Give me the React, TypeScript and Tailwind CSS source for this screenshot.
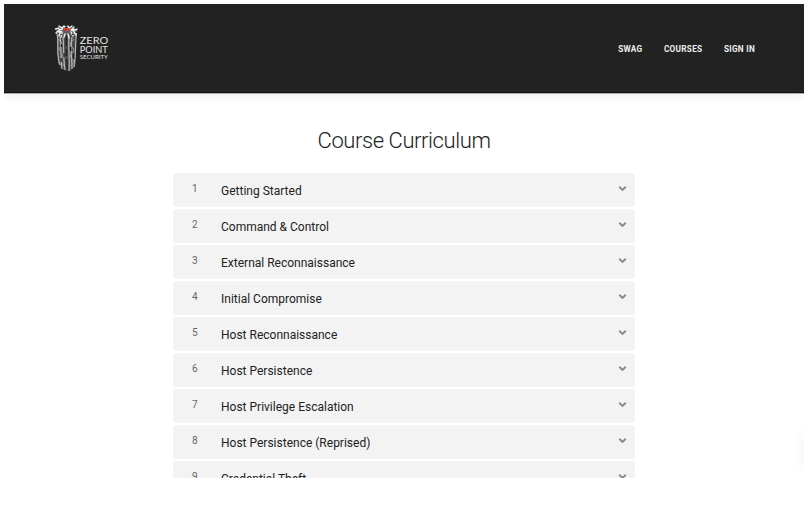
const lessons = [
  'Getting Started',
  'Command & Control',
  'External Reconnaissance',
  'Initial Compromise',
  'Host Reconnaissance',
  'Host Persistence',
  'Host Privilege Escalation',
  'Host Persistence (Reprised)',
  'Credential Theft',
];

function Logo() {
  return (
    <svg width="56" height="50" viewBox="0 0 56 50" aria-label="Zero Point Security">
      <path d="M3 10L22 10L22 30L20 44L15 47L9 46L5 40L3 26Z" fill="#4a4a4a" />
      <g fill="none" stroke="#b8b8b8" strokeWidth="1.2">
        <path d="M3 9C5 20 3 25 4 31C5 35 4 38 6 41M6 13C8 24 6 33 8 45M9 13C10 25 9 34 11 46M15 13C14 26 16 34 15 47M18 13C16 25 18 35 18 45M22.500 9C21 22 22 34 20 43" />
        <path d="M4 15l4 5-3 5 4 6-3 6 4 5M20 15l-4 5 4 6-4 6 4 5-3 5" strokeWidth="0.8" stroke="#aaa" />
      </g>
      <path d="M12.500 14v8M12.500 25v7M13 35v11M7.500 20v3M16.700 23v4M7 34v4M19.500 30v5M10 29v4" stroke="#222" strokeWidth="1.400" />
      <path d="M2 6L6 3L11 2L18 3L23 6L21 11L15 13L8 12L4 11Z" fill="#5c5c5c" />
      <g fill="none" stroke="#eee" strokeWidth="1.400" strokeLinecap="round">
        <path d="M1.500 5l3-1 1 2 3-1M5 2l3 2 2-2 2 2M14 2l1 2 3-2M20 3l-2 2 4 1 1-1M2 9l2-2 2 2-1 3M8 9l-1 4M11 10l-1 3M14 10l1 4M17 8l2 4M20 8l2 3M8 8l-3-1M17 6l3 1" />
      </g>
      <path d="M7 10.500h1M12.500 11v3M18 10.500h1M11 3.500h2" stroke="#222" strokeWidth="1.200" />
      <ellipse cx="12.800" cy="5.500" rx="3" ry="1.400" fill="#ef352c" />
      <g fill="#e4e4e4" fontFamily="Lato, sans-serif">
        <text x="25.800" y="19.800" fontSize="10" textLength="28.300" lengthAdjust="spacingAndGlyphs">ZERO</text>
        <text x="25.800" y="28.900" fontSize="9" textLength="28" lengthAdjust="spacingAndGlyphs">POINT</text>
        <text x="25.800" y="35.300" fontSize="5.900" textLength="28" lengthAdjust="spacingAndGlyphs">SECURITY</text>
      </g>
    </svg>
  );
}

function Chevron() {
  return (
    <svg className="mt-3 mr-2 h-[7px] w-[9px]" viewBox="0 0 9 7" fill="none" stroke="#8c8c8c" strokeWidth="2">
      <path d="M1.200 1.700L4.500 4.900L7.800 1.700" />
    </svg>
  );
}

export default function App() {
  return (
    <div className="h-[522px] w-[808px] overflow-hidden bg-white p-1 font-['Roboto',sans-serif]">
      <div className="h-[474px] w-[800px] overflow-hidden">
        <header className="flex h-[89px] items-start justify-between border-b border-[#101010] bg-[#222] pr-[49px] pl-[50px] shadow-[0_1px_0_#aaa,0_3px_12px_rgba(0,0,0,0.08)]">
          <div className="pt-5">
            <Logo />
          </div>
          <nav className="flex gap-[21.500px] pt-[38.500px] text-[8.200px] leading-[12px] font-bold tracking-[0.300px] text-[#eee]">
            <a>SWAG</a>
            <a>COURSES</a>
            <a>SIGN IN</a>
          </nav>
        </header>
        <main className="relative pt-[33px]">
          <h1 className="text-center text-[22px] leading-[30px] font-light tracking-[-0.420px] text-[#222]">Course Curriculum</h1>
          <ol className="mx-auto mt-[17px] flex w-[462px] flex-col gap-[1.700px]">
            {lessons.map((title, i) => (
              <li key={title} className="flex h-[34.300px] shrink-0 items-start rounded-[3px] bg-[#f3f3f3]">
                <span className="w-[48px] pt-[9px] pl-[19px] text-[10px] leading-[13px] text-[#666]">{i + 1}</span>
                <span className="flex-1 pt-[10px] text-[12px] leading-[17px] text-[#222]">{title}</span>
                <Chevron />
              </li>
            ))}
          </ol>
          <div className="absolute top-[336px] left-[803px] size-[42px] rounded-full bg-white shadow-[0_0_18px_rgba(0,0,0,0.120)]" />
        </main>
      </div>
    </div>
  );
}
